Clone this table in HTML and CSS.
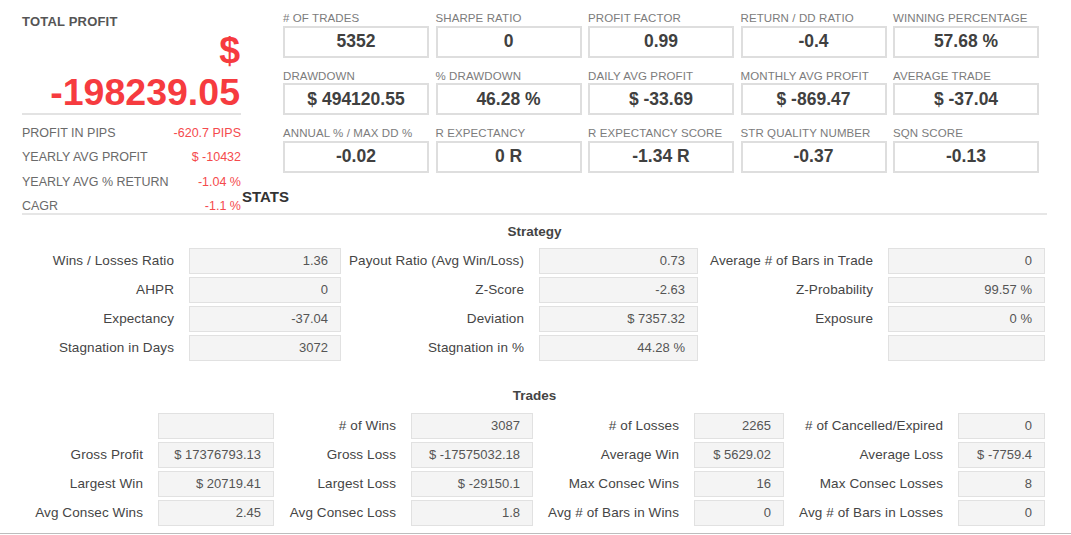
FILE: index.html
```html
<!DOCTYPE html>
<html>
<head>
<meta charset="utf-8">
<link rel="stylesheet" href="styles.css">
</head>
<body>
<div class="page">
  <div class="top">
    <div class="summary">
      <div class="summary-title">TOTAL PROFIT</div>
      <div class="total"><span class="total-line">$</span><span class="total-line">-198239.05</span></div>
      <ul class="summary-list">
        <li><span>PROFIT IN PIPS</span><span class="neg">-620.7 PIPS</span></li>
        <li><span>YEARLY AVG PROFIT</span><span class="neg">$ -10432</span></li>
        <li><span>YEARLY AVG % RETURN</span><span class="neg">-1.04 %</span></li>
        <li><span>CAGR</span><span class="neg">-1.1 %</span></li>
      </ul>
    </div>
    <div class="top-right">
      <div class="metrics">
        <div class="metric"><div class="metric-label"># OF TRADES</div><div class="metric-value">5352</div></div>
        <div class="metric"><div class="metric-label">SHARPE RATIO</div><div class="metric-value">0</div></div>
        <div class="metric"><div class="metric-label">PROFIT FACTOR</div><div class="metric-value">0.99</div></div>
        <div class="metric"><div class="metric-label">RETURN / DD RATIO</div><div class="metric-value">-0.4</div></div>
        <div class="metric"><div class="metric-label">WINNING PERCENTAGE</div><div class="metric-value">57.68 %</div></div>
        <div class="metric"><div class="metric-label">DRAWDOWN</div><div class="metric-value">$ 494120.55</div></div>
        <div class="metric"><div class="metric-label">% DRAWDOWN</div><div class="metric-value">46.28 %</div></div>
        <div class="metric"><div class="metric-label">DAILY AVG PROFIT</div><div class="metric-value">$ -33.69</div></div>
        <div class="metric"><div class="metric-label">MONTHLY AVG PROFIT</div><div class="metric-value">$ -869.47</div></div>
        <div class="metric"><div class="metric-label">AVERAGE TRADE</div><div class="metric-value">$ -37.04</div></div>
        <div class="metric"><div class="metric-label">ANNUAL % / MAX DD %</div><div class="metric-value">-0.02</div></div>
        <div class="metric"><div class="metric-label">R EXPECTANCY</div><div class="metric-value">0 R</div></div>
        <div class="metric"><div class="metric-label">R EXPECTANCY SCORE</div><div class="metric-value">-1.34 R</div></div>
        <div class="metric"><div class="metric-label">STR QUALITY NUMBER</div><div class="metric-value">-0.37</div></div>
        <div class="metric"><div class="metric-label">SQN SCORE</div><div class="metric-value">-0.13</div></div>
      </div>
      <h2 class="stats-title">STATS</h2>
    </div>
  </div>

  <section class="stats">
    <h3 class="group-title strategy-title">Strategy</h3>
    <div class="kv kv-strategy">
      <div class="k">Wins / Losses Ratio</div><div class="v">1.36</div>
      <div class="k">Payout Ratio (Avg Win/Loss)</div><div class="v">0.73</div>
      <div class="k">Average # of Bars in Trade</div><div class="v">0</div>

      <div class="k">AHPR</div><div class="v">0</div>
      <div class="k">Z-Score</div><div class="v">-2.63</div>
      <div class="k">Z-Probability</div><div class="v">99.57 %</div>

      <div class="k">Expectancy</div><div class="v">-37.04</div>
      <div class="k">Deviation</div><div class="v">$ 7357.32</div>
      <div class="k">Exposure</div><div class="v">0 %</div>

      <div class="k">Stagnation in Days</div><div class="v">3072</div>
      <div class="k">Stagnation in %</div><div class="v">44.28 %</div>
      <div class="k"></div><div class="v"></div>
    </div>

    <h3 class="group-title trades-title">Trades</h3>
    <div class="kv kv-trades">
      <div class="k"></div><div class="v"></div>
      <div class="k"># of Wins</div><div class="v">3087</div>
      <div class="k"># of Losses</div><div class="v">2265</div>
      <div class="k"># of Cancelled/Expired</div><div class="v">0</div>

      <div class="k">Gross Profit</div><div class="v">$ 17376793.13</div>
      <div class="k">Gross Loss</div><div class="v">$ -17575032.18</div>
      <div class="k">Average Win</div><div class="v">$ 5629.02</div>
      <div class="k">Average Loss</div><div class="v">$ -7759.4</div>

      <div class="k">Largest Win</div><div class="v">$ 20719.41</div>
      <div class="k">Largest Loss</div><div class="v">$ -29150.1</div>
      <div class="k">Max Consec Wins</div><div class="v">16</div>
      <div class="k">Max Consec Losses</div><div class="v">8</div>

      <div class="k">Avg Consec Wins</div><div class="v">2.45</div>
      <div class="k">Avg Consec Loss</div><div class="v">1.8</div>
      <div class="k">Avg # of Bars in Wins</div><div class="v">0</div>
      <div class="k">Avg # of Bars in Losses</div><div class="v">0</div>
    </div>
  </section>
</div>
</body>
</html>
```

FILE: styles.css
```css
* {
  box-sizing: border-box;
}

html, body {
  margin: 0;
  padding: 0;
  background: #ffffff;
}

body {
  font-family: "Liberation Sans", Arial, sans-serif;
  color: #444444;
  width: 1071px;
  height: 535px;
  overflow: hidden;
}

.page {
  padding: 0 24px 7px 22px;
  border-bottom: 1px solid #bdbdbd;
}

/* ---------- top area ---------- */
.top {
  display: flex;
}

.summary {
  width: 219px;
  flex: none;
  padding-top: 14px;
}

.summary-title {
  font-size: 13px;
  font-weight: bold;
  line-height: 16px;
  color: #555555;
  letter-spacing: 0.2px;
}

.total {
  display: flex;
  flex-direction: column;
  align-items: flex-end;
  font-size: 37.5px;
  font-weight: bold;
  line-height: 41.5px;
  color: #f63b3f;
  border-bottom: 2px solid #e3e3e3;
  padding-right: 1px;
}

.summary-list {
  list-style: none;
  margin: 0;
  padding: 0;
}

.summary-list li {
  display: flex;
  justify-content: space-between;
  align-items: flex-end;
  height: 24.5px;
  font-size: 12.5px;
  line-height: 14px;
  color: #6a6a6a;
}

.summary-list .neg {
  color: #f54a4d;
}

.top-right {
  flex: 1;
  display: flex;
  flex-direction: column;
  padding-top: 12.4px;
}

.metrics {
  display: grid;
  grid-template-columns: repeat(5, 146px);
  column-gap: 6.5px;
  row-gap: 12px;
  margin-left: 42px;
}

.metric-label {
  font-size: 11.5px;
  line-height: 13px;
  color: #7c7c7c;
  margin-bottom: 0.5px;
  white-space: nowrap;
  letter-spacing: 0.1px;
}

.metric-value {
  height: 32px;
  border: 2px solid #dedede;
  display: flex;
  align-items: center;
  justify-content: center;
  font-size: 17.5px;
  font-weight: bold;
  color: #404040;
}

.stats-title {
  margin: auto 0 8px 1px;
  font-size: 15px;
  line-height: 17px;
  font-weight: bold;
  color: #333333;
}

/* ---------- stats ---------- */
.stats {
  border-top: 2px solid #e6e6e6;
}

.group-title {
  margin: 0;
  text-align: center;
  font-size: 13.5px;
  line-height: 16px;
  font-weight: bold;
  color: #444444;
}

.strategy-title {
  padding-top: 8.5px;
  padding-bottom: 8.5px;
}

.trades-title {
  padding-top: 26.5px;
  padding-bottom: 9px;
}

.kv {
  display: grid;
  row-gap: 3px;
  font-size: 13px;
}

.kv-strategy {
  grid-template-columns: 167px 152px 198px 159px 190px 157px;
}

.kv-trades {
  grid-template-columns: 136px 116px 137px 122px 161px 90px 174px 87px;
}

.k {
  height: 26px;
  line-height: 26px;
  font-size: 13.5px;
  letter-spacing: 0.1px;
  text-align: right;
  padding-right: 15px;
  color: #454545;
  white-space: nowrap;
}

.v {
  height: 26px;
  line-height: 24px;
  text-align: right;
  padding-right: 12px;
  background: #f4f4f4;
  border: 1px solid #e1e1e1;
  color: #555555;
  white-space: nowrap;
}
```
